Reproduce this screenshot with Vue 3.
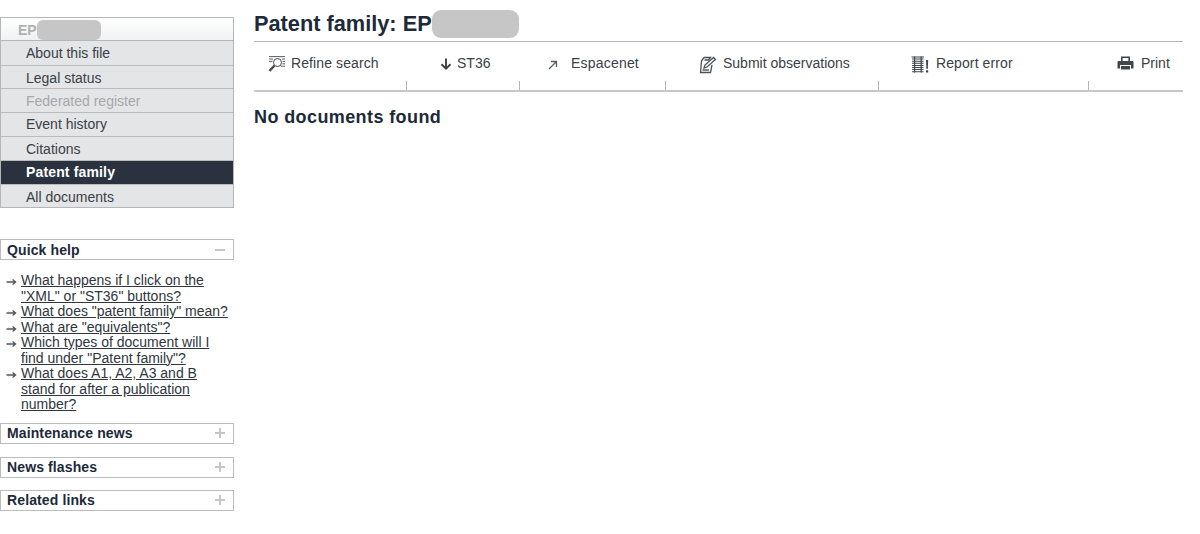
<template>
  <div class="page">
    <!-- Left column -->
    <aside class="sidebar">
      <nav class="menu">
        <div class="menu-head">EP<span class="blur-small"></span></div>
        <div
          v-for="m in menu"
          :key="m.label"
          class="menu-item"
          :class="{ active: m.active, disabled: m.disabled }"
        >{{ m.label }}</div>
      </nav>

      <div class="box quick">
        <span>Quick help</span>
        <span class="box-sign minus"></span>
      </div>
      <ul class="help-list">
        <li v-for="q in questions" :key="q">
          <svg class="help-arrow" width="11" height="8" viewBox="0 0 11 8" fill="none" stroke="#4f575f" stroke-width="1.3"><path d="M0.5 4H9.5M6.6 1.6L9.6 4L6.6 6.4"/></svg>
          <a>{{ q }}</a>
        </li>
      </ul>

      <div class="box" v-for="b in boxes" :key="b">
        <span>{{ b }}</span>
        <span class="box-sign plus"></span>
      </div>
    </aside>

    <!-- Main -->
    <main class="content">
      <h1 class="title">Patent family: EP<span class="blur-big"></span></h1>
      <div class="toolbar">
        <div
          v-for="t in tools"
          :key="t.label"
          class="tool"
          :class="t.cls"
        >
          <svg v-if="t.icon === 'refine'" width="18" height="16" viewBox="0 0 18 16" fill="none" stroke="#444b52" stroke-width="1"><circle cx="9.5" cy="6.5" r="4"/><path d="M6.5 9.5L1.5 15" stroke-width="2.4"/><path d="M1 0.6H17M1 3H5M14 3H17M1 5.4H4.5M14.5 5.4H17M14.5 7.8H17M13 10.2H17" stroke-width="0.9"/></svg>
          <svg v-else-if="t.icon === 'down'" width="12" height="12" viewBox="0 0 12 12" fill="none" stroke="#3a4149" stroke-width="1.9"><path d="M6 0.5V10.5M1.5 6.2L6 10.6L10.5 6.2"/></svg>
          <svg v-else-if="t.icon === 'out'" width="10" height="10" viewBox="0 0 10 10" fill="none" stroke="#555c63" stroke-width="1.3"><path d="M1 9L8.5 1.5M3 1.5H8.5V7"/></svg>
          <svg v-else-if="t.icon === 'edit'" width="18" height="18" viewBox="0 0 18 18" fill="none" stroke="#4a5158" stroke-width="1.3"><path d="M5 1.5H11.5L9.5 4H5.5M5 1.5L2.5 5L1.5 16.5H11.5L13 9"/><path d="M5 12L6 9L14.5 1.5L16.5 3.5L8 11L5 12Z"/><path d="M3.5 14H10" stroke-width="1.4"/></svg>
          <svg v-else-if="t.icon === 'error'" width="20" height="18" viewBox="0 0 20 18" fill="#3f464d"><path d="M0.5 0.5H13V1.5H0.5ZM1 2.6H12.5V3.6H1ZM1 4.7H12.5V5.7H1ZM1 6.8H12.5V7.8H1ZM1 8.9H12.5V9.9H1ZM1 11H12.5V12H1ZM1 13.1H12.5V14.1H1ZM1 15.2H12.5V16.2H1Z"/><path d="M3 0.5H4.2V16.5H3ZM9.6 0.5H10.8V16.5H9.6Z"/><path d="M15 4H17.2L16.8 13H15.4ZM15 14.3H17.2V16.5H15Z"/></svg>
          <svg v-else-if="t.icon === 'print'" width="17" height="14" viewBox="0 0 17 14" fill="#3f464d"><path d="M4 0.5H13V5H11.4V2H5.6V5H4Z"/><path d="M1.5 5H15.5Q16.5 5 16.5 6V12.5H14V9H3V12.5H0.5V6Q0.5 5 1.5 5Z"/><path d="M4 10H13V13.5H4Z"/></svg>
          <span>{{ t.label }}</span>
        </div>
      </div>
      <h2 class="empty">No documents found</h2>
    </main>
  </div>
</template>

<script setup>
const menu = [
  { label: 'About this file' },
  { label: 'Legal status' },
  { label: 'Federated register', disabled: true },
  { label: 'Event history' },
  { label: 'Citations' },
  { label: 'Patent family', active: true },
  { label: 'All documents' },
]

const questions = [
  'What happens if I click on the "XML" or "ST36" buttons?',
  'What does "patent family" mean?',
  'What are "equivalents"?',
  'Which types of document will I find under "Patent family"?',
  'What does A1, A2, A3 and B stand for after a publication number?',
]

const boxes = ['Maintenance news', 'News flashes', 'Related links']

const tools = [
  { label: 'Refine search', icon: 'refine', cls: 'refine' },
  { label: 'ST36', icon: 'down', cls: 'st36' },
  { label: 'Espacenet', icon: 'out', cls: 'espacenet' },
  { label: 'Submit observations', icon: 'edit', cls: 'submit' },
  { label: 'Report error', icon: 'error', cls: 'report' },
  { label: 'Print', icon: 'print', cls: 'print' },
]
</script>

<style>
html, body { margin: 0; background: #fff; }
</style>

<style scoped>
.page {
  display: flex;
  width: 1200px;
  height: 534px;
  overflow: hidden;
  background: #fff;
  font-family: "Liberation Sans", Arial, sans-serif;
  color: #333a42;
}

.sidebar { width: 234px; padding-top: 17px; flex-shrink: 0; }

.menu { border: 1px solid #b4b6b8; }
.menu-head {
  height: 22px;
  line-height: 25px;
  padding-left: 17px;
  font-size: 14px;
  font-weight: 700;
  color: #aeb0b3;
  background: linear-gradient(#fff, #f0f1f2);
  border-bottom: 1px solid #b4b6b8;
  display: flex;
}
.blur-small {
  width: 64px;
  height: 20px;
  margin-top: 2px;
  border-radius: 6px;
  background: #c6c6c6;
  filter: blur(0.6px);
}
.menu-item {
  height: 23px;
  line-height: 23px;
  padding-left: 25px;
  font-size: 14px;
  color: #3a4048;
  background: #e4e5e7;
  border-bottom: 1px solid #b9bbbd;
}
.menu-item:nth-child(2) { height: 24px; line-height: 25px; }
.menu-item:nth-child(3) { height: 22px; line-height: 25px; }
.menu-item:nth-child(4) { line-height: 25px; }
.menu-item:nth-child(6) { line-height: 25px; }
.menu-item:last-child { height: 22px; line-height: 25px; border-bottom: none; }
.menu-item.disabled { color: #a6a8ab; }
.menu-item.active {
  background: #29323e;
  color: #fff;
  font-weight: 700;
  letter-spacing: 0.15px;
}

.box {
  display: flex;
  align-items: center;
  justify-content: space-between;
  box-sizing: border-box;
  height: 21px;
  margin-bottom: 12px;
  padding: 0 6px;
  border: 1px solid #bcbcbc;
  font-size: 14px;
  font-weight: 700;
  letter-spacing: 0.12px;
  color: #1c2a3a;
}
.box:nth-of-type(2) { margin-bottom: 13px; }
.box.quick { margin-top: 31px; margin-bottom: 0; }

.box-sign { position: relative; width: 10px; height: 10px; margin-right: 2px; }
.box-sign::before {
  content: "";
  position: absolute;
  left: 0;
  right: 0;
  top: 4px;
  height: 2px;
  background: #c4c6c8;
}
.box-sign.plus::after {
  content: "";
  position: absolute;
  top: 0;
  bottom: 0;
  left: 4px;
  width: 2px;
  background: #c4c6c8;
}

.help-list {
  list-style: none;
  margin: 0 0 10px;
  padding: 13px 0 0 21px;
  font-size: 14px;
  line-height: 15.5px;
}
.help-list li { position: relative; width: 208px; }
.help-list a { color: #2f363e; text-decoration: underline; }
.help-arrow { position: absolute; left: -15px; top: 5px; }

.content { width: 929px; margin-left: 20px; flex-shrink: 0; }

.title {
  display: flex;
  margin: 11px 0 0;
  height: 30px;
  line-height: 26px;
  font-size: 21.75px;
  font-weight: 700;
  color: #1c2a3a;
}
.blur-big {
  width: 87px;
  height: 28px;
  margin-top: -1px;
  border-radius: 9px;
  background: #c6c6c6;
  filter: blur(0.6px);
}

.toolbar {
  display: flex;
  height: 48px;
  border-top: 1px solid #b4b6b8;
  border-bottom: 2px solid #c6c8ca;
  font-size: 14px;
  color: #3a4048;
}
.tool {
  position: relative;
  display: flex;
  align-items: flex-start;
  gap: 5px;
  padding-top: 12px;
  box-sizing: border-box;
  line-height: 18px;
}
.tool::after {
  content: "";
  position: absolute;
  right: 0;
  bottom: 0;
  width: 1px;
  height: 9px;
  background: #b4b6b8;
}
.tool:last-child::after { display: none; }
.tool svg { flex-shrink: 0; margin-top: 2px; }

.refine { width: 153px; padding-left: 14px; gap: 5px; }
.refine span { letter-spacing: 0.1px; }
.st36 { width: 113px; padding-left: 33px; }
.st36 svg { margin-top: 4px; }
.espacenet { width: 146px; padding-left: 28px; gap: 13px; }
.espacenet span { letter-spacing: 0.2px; }
.espacenet svg { margin-top: 6px; }
.submit { width: 213px; padding-left: 33px; gap: 6px; }
.report { width: 210px; padding-left: 32px; gap: 5px; }
.report span { letter-spacing: 0.1px; }
.print { width: 94px; padding-left: 28px; gap: 7px; }
.print svg { margin-top: 2px; }

.empty {
  margin: 15px 0 0;
  font-size: 18px;
  line-height: 20px;
  font-weight: 700;
  letter-spacing: 0.4px;
  color: #1c2a3a;
}
</style>
